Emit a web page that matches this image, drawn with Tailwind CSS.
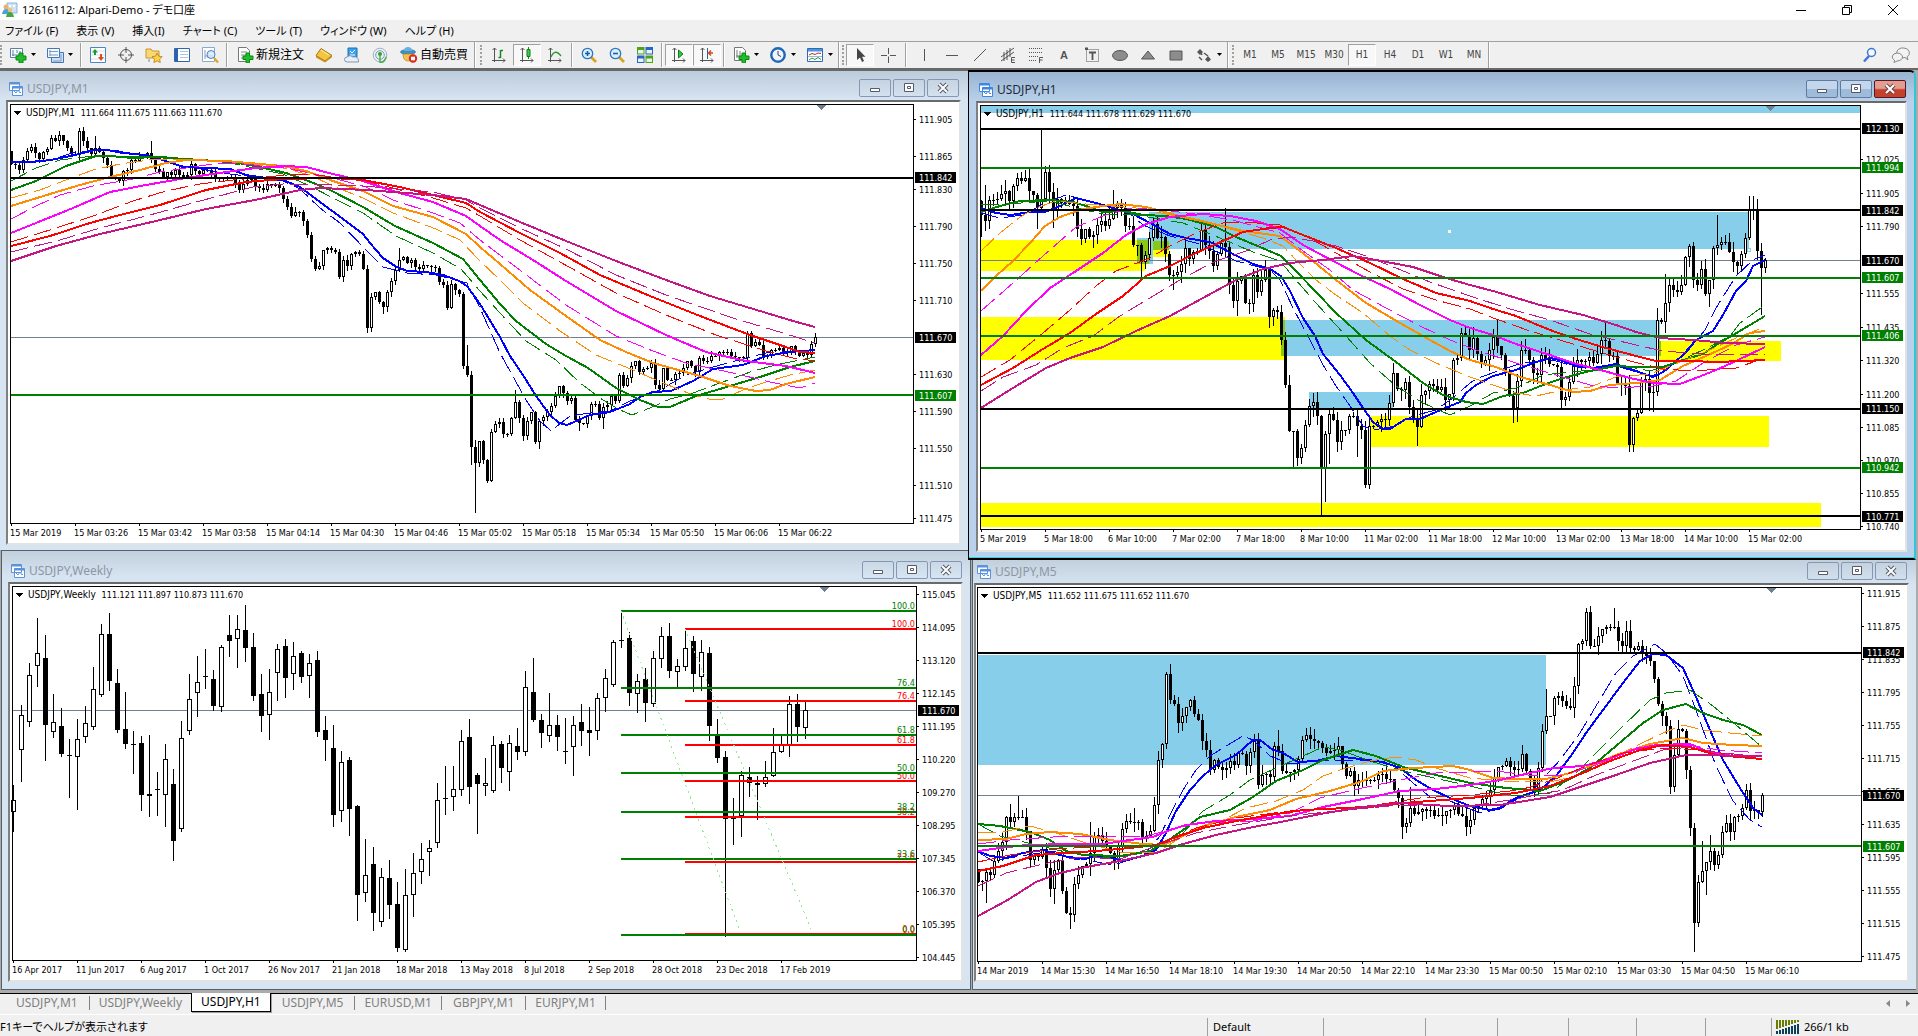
<!DOCTYPE html>
<html lang="ja">
<head>
    <meta charset="UTF-8">
    <meta name="viewport" content="width=device-width, initial-scale=1.0">
    <title>12616112: Alpari-Demo - デモ口座</title>
    <script src="https://cdn.jsdelivr.net/npm/@tailwindcss/browser@4"></script>
</head>
<body class="h-screen flex flex-col overflow-hidden bg-[#f0f0f0] text-black text-[12px] leading-4 font-['Noto_Sans','Noto_Sans_CJK_JP',sans-serif] [font-feature-settings:'palt']">

    <!-- Title bar -->
    <header class="h-5 shrink-0 bg-white flex items-center pl-0.5">
        <svg class="w-4 h-4" viewBox="0 0 16 16"><path d="M5 1h10v10H5z" fill="#cfe3f7" stroke="#8db4dc"/><path d="M7 3h2v2H7zM11 3h2v2h-2z" fill="#fff"/><circle cx="4" cy="5" r="2.5" fill="#e9b36a"/><path d="M0 12q1-5 4-5t4 5z" fill="#4da3d9"/><circle cx="8" cy="8" r="2.2" fill="#f0bd7c"/><path d="M4 15q1-5 4-5t4 5z" fill="#46a546"/></svg>
        <h1 class="pl-1 text-[11px] whitespace-nowrap">12616112: Alpari-Demo - デモ口座</h1>
        <div class="ml-auto flex pr-0.5">
            <button class="w-[46px] flex justify-center" aria-label="最小化"><svg class="w-3 h-3" viewBox="0 0 12 12"><path d="M1 6.5h10" stroke="#000"/></svg></button>
            <button class="w-[46px] flex justify-center" aria-label="元に戻す"><svg class="w-3 h-3" viewBox="0 0 12 12" fill="none" stroke="#000"><path d="M1.5 3.5h7v7h-7zM3.5 3V1.5h7v7H9"/></svg></button>
            <button class="w-[46px] flex justify-center" aria-label="閉じる"><svg class="w-3 h-3" viewBox="0 0 12 12"><path d="M1 1l10 10M11 1L1 11" stroke="#000"/></svg></button>
        </div>
    </header>

    <!-- Menu -->
    <nav class="h-[21px] shrink-0 flex items-center gap-[18px] px-[5px] text-[11px] whitespace-nowrap">
        <button>ファイル (F)</button>
        <button>表示 (V)</button>
        <button>挿入(I)</button>
        <button>チャート (C)</button>
        <button>ツール (T)</button>
        <button>ウィンドウ (W)</button>
        <button>ヘルプ (H)</button>
    </nav>

    <!-- Toolbars -->
    <div class="h-[29px] shrink-0 flex items-center border-t border-[#a0a0a0] border-b-2 border-b-[#696969] pb-px whitespace-nowrap">
        <div class="w-[2px] h-5 border-l-2 border-dotted border-[#a0a0a0] mr-0.5"></div>
        <button class="w-[37px] flex items-center gap-1 pl-[5px]" aria-label="新規チャート">
            <svg class="w-[18px] h-4" viewBox="0 0 18 16"><path d="M1.500 1.500h12v9h-12z" fill="#fff" stroke="#5b7fa6"/><path d="M4 3v6M3 8h9M8 3v3M11 4v3" stroke="#5b7fa6"/><path d="M10 6h4v3h3v4h-3v3h-4v-3H7V9h3z" fill="#1fbf2a" stroke="#0b8714"/></svg>
            <svg class="w-[5px] h-[3px]" viewBox="0 0 5 3"><path d="M0 0h5L2.500 3z"/></svg>
        </button>
        <button class="w-[37px] flex items-center gap-1 pl-[5px]" aria-label="プロファイル">
            <svg class="w-[18px] h-4" viewBox="0 0 18 16"><path d="M5.500 5.500h12v10h-12z" fill="#cfe0f5" stroke="#4577b5"/><path d="M1.500 1.500h12v9h-12z" fill="#f4f9ff" stroke="#4577b5"/><path d="M4 3v6M3 4.500h9M3 8h9M15 7v7H7" stroke="#7a9cc8" fill="none"/></svg>
            <svg class="w-[5px] h-[3px]" viewBox="0 0 5 3"><path d="M0 0h5L2.500 3z"/></svg>
        </button>
        <div class="w-[2px] h-6 mx-0.5 border-l border-[#a0a0a0] bg-white"></div>
        <button class="w-7 flex justify-center" aria-label="気配値表示"><svg class="w-4 h-4" viewBox="0 0 16 16"><path d="M.5.5h15v15H.5z" fill="#fff" stroke="#4b86c4"/><path d="M1 4h14M1 8h14M1 12h14" stroke="#cfe0f2"/><path d="M5 2l3 3.500H6V8H4V5.500H2z" fill="#16a022"/><path d="M11 14l3-4h-2V7h-2v3H8z" fill="#e2491d"/></svg></button>
        <button class="w-7 flex justify-center" aria-label="データウィンドウ"><svg class="w-4 h-4" viewBox="0 0 16 16" fill="none" stroke="#555"><circle cx="8" cy="8" r="5.500"/><path d="M8 0v6M8 10v6M0 8h6M10 8h6"/></svg></button>
        <button class="w-7 flex justify-center" aria-label="ナビゲーター"><svg class="w-[18px] h-4" viewBox="0 0 18 16"><path d="M1 2h5l1.500 2H14v7H1z" fill="#f8d775" stroke="#c8962e"/><path d="M4 12v3" stroke="#6e8fb9"/><path d="M12 6l1.700 3.200 3.500.500-2.600 2.400.700 3.500-3.300-1.700-3.200 1.700.700-3.500L7 9.700l3.500-.500z" fill="#ffd24a" stroke="#b67d10" stroke-width=".8"/></svg></button>
        <button class="w-7 flex justify-center" aria-label="ターミナル"><svg class="w-4 h-4" viewBox="0 0 16 16"><path d="M.5 1.500h15v13H.5z" fill="#fff" stroke="#2e66ac"/><path d="M1 2h3v12H1z" fill="#2b63b4"/><path d="M6 4.500h8M6 7.500h8M6 10.500h8" stroke="#a9c4e8"/></svg></button>
        <button class="w-7 flex justify-center" aria-label="ストラテジーテスター"><svg class="w-[18px] h-4" viewBox="0 0 18 16"><path d="M1.500.5h12v14h-12z" fill="#fff" stroke="#8aa9cf"/><path d="M4 3v9M7 5v6M4 9h8" stroke="#7b9cc4"/><circle cx="10" cy="7.500" r="4" fill="#d3e8fb" fill-opacity=".8" stroke="#4a83c0"/><path d="M13 11l4 4.500" stroke="#e0a422" stroke-width="2.200"/></svg></button>
        <div class="w-[2px] h-6 mx-0.5 border-l border-[#a0a0a0] bg-white"></div>
        <button class="w-20 flex items-center justify-center gap-0.5">
            <svg class="w-[18px] h-4" viewBox="0 0 18 16"><path d="M2.500.5h8l3 3v11h-11z" fill="#fff" stroke="#777"/><path d="M5 5h6M5 8h5M5 11h3" stroke="#888"/><path d="M10 6h3.500v3h3.500v3.500h-3.500v3.300H10v-3.300H7V9h3z" fill="#1fbf2a" stroke="#0b8714"/></svg>
            <span>新規注文</span>
        </button>
        <button class="w-7 flex justify-center" aria-label="MetaEditor"><svg class="w-[18px] h-4" viewBox="0 0 18 16"><path d="M6 1.500l11 7-7 5.500L1 8.500z" fill="#f4c542" stroke="#a8740e"/><path d="M1 8.500l9 5.500 7-5.500v1.700L10 15.500 1 10.500z" fill="#c98f17"/><path d="M6 3l8 5" stroke="#fff0b0"/></svg></button>
        <button class="w-7 flex justify-center" aria-label="MQL5"><svg class="w-4 h-4" viewBox="0 0 16 16"><path d="M4 1h9v9H4z" fill="#3aa2ea" stroke="#1c6eb6"/><path d="M6 4l2 2 3-3M6 8h5" stroke="#fff" fill="none"/><path d="M3 15a2.500 2.500 0 010-5q3-3 6 0 6-1 5.500 5z" fill="#e9eff7" stroke="#8295b3"/></svg></button>
        <button class="w-7 flex justify-center" aria-label="シグナル"><svg class="w-4 h-4" viewBox="0 0 16 16" fill="none"><circle cx="8" cy="8" r="6.800" stroke="#9bb0c4"/><circle cx="8" cy="8" r="4.300" stroke="#6f9bc4"/><circle cx="8" cy="7" r="2" fill="#2aa32f"/><path d="M8 8v8q5-1 6-6" stroke="#49b04c" stroke-width="1.500"/></svg></button>
        <button class="w-20 flex items-center justify-center gap-0.5">
            <svg class="w-[18px] h-4" viewBox="0 0 18 16"><ellipse cx="8" cy="5" rx="7.500" ry="2.500" fill="#3d90c9" stroke="#23628f" stroke-width=".6"/><path d="M4 4q0-4 4-4t4 4z" fill="#65b2e0"/><path d="M3 7h10q0 7-5 7T3 7z" fill="#f2c350" stroke="#b98319" stroke-width=".7"/><circle cx="13" cy="11.500" r="4.200" fill="#dd2a1b"/><path d="M11 9.700h4v3.600h-4z" fill="#fff"/></svg>
            <span>自動売買</span>
        </button>
        <div class="w-[2px] h-[26px] border-l border-[#a0a0a0] bg-white mr-1"></div>
        <div class="w-[2px] h-5 border-l-2 border-dotted border-[#a0a0a0] mr-[3px]"></div>
        <button class="w-7 flex justify-center" aria-label="バーチャート"><svg class="w-4 h-4" viewBox="0 0 16 16" fill="none" stroke="#555"><path d="M3.500 1v14M1 13.500h13M1.500 3l2-2 2 2M12 11.500l2 2-2 2"/><path d="M9.500 3v8M9.500 3.500h2.500M7.500 10.500h2" stroke="#158a20" stroke-width="1.500"/></svg></button>
        <button class="w-7 h-[22px] flex items-center justify-center bg-[#f8f8f8] border border-[#a0a0a0] border-r-white border-b-white" aria-label="ローソク足"><svg class="w-4 h-4" viewBox="0 0 16 16" fill="none" stroke="#555"><path d="M3.500 1v14M1 13.500h13M1.500 3l2-2 2 2M12 11.500l2 2-2 2"/><path d="M9.500 0v12" stroke="#158a20"/><path d="M8 2.500h3v7H8z" fill="#3ccc48" stroke="#0c7c18"/></svg></button>
        <button class="w-7 flex justify-center" aria-label="ラインチャート"><svg class="w-4 h-4" viewBox="0 0 16 16" fill="none" stroke="#555"><path d="M3.500 1v14M1 13.500h13M1.500 3l2-2 2 2M12 11.500l2 2-2 2"/><path d="M4 10q4-9 10-1" stroke="#2a9a34" stroke-width="1.300"/></svg></button>
        <div class="w-[2px] h-6 mx-0.5 border-l border-[#a0a0a0] bg-white"></div>
        <button class="w-7 flex justify-center" aria-label="拡大"><svg class="w-4 h-4" viewBox="0 0 16 16"><path d="M10 10l5 5" stroke="#d9a520" stroke-width="2.800"/><circle cx="6.500" cy="6.500" r="5.200" fill="#d9efff" stroke="#2f77bd" stroke-width="1.300"/><path d="M4 6.500h5M6.500 4v5" stroke="#1c5ea8" stroke-width="1.600"/></svg></button>
        <button class="w-7 flex justify-center" aria-label="縮小"><svg class="w-4 h-4" viewBox="0 0 16 16"><path d="M10 10l5 5" stroke="#d9a520" stroke-width="2.800"/><circle cx="6.500" cy="6.500" r="5.200" fill="#d9efff" stroke="#2f77bd" stroke-width="1.300"/><path d="M4 6.500h5" stroke="#1c5ea8" stroke-width="1.600"/></svg></button>
        <button class="w-7 flex justify-center" aria-label="整列"><svg class="w-4 h-4" viewBox="0 0 16 16"><path d="M0 0h7.500v7.500H0zM8.500 8.500H16V16H8.500z" fill="#4ba31a"/><path d="M8.500 0H16v7.500H8.500zM0 8.500h7.500V16H0z" fill="#2563cf"/><path d="M1 3h5.500v3.500H1zM9.500 3H15v3.500H9.500zM1 11.500h5.500V15H1zM9.500 11.500H15V15H9.500z" fill="#eaf3e4"/></svg></button>
        <div class="w-[2px] h-6 mx-0.5 border-l border-[#a0a0a0] bg-white"></div>
        <button class="w-7 h-[22px] flex items-center justify-center bg-[#f8f8f8] border border-[#a0a0a0] border-r-white border-b-white" aria-label="自動スクロール"><svg class="w-4 h-4" viewBox="0 0 16 16" fill="none" stroke="#555"><path d="M3.500 1v14M1 13.500h13M1.500 3l2-2 2 2M12 11.500l2 2-2 2"/><path d="M7.500 3l4.500 4-4.500 4z" fill="#3cc148" stroke="#128020"/></svg></button>
        <button class="w-7 h-[22px] flex items-center justify-center bg-[#f8f8f8] border border-[#a0a0a0] border-r-white border-b-white" aria-label="チャートシフト"><svg class="w-4 h-4" viewBox="0 0 16 16" fill="none" stroke="#555"><path d="M3.500 1v14M1 13.500h13M1.500 3l2-2 2 2M12 11.500l2 2-2 2"/><path d="M8.500 1v11" stroke="#2a62a8"/><path d="M14 6h-4m2-2.500L9.500 6 12 8.500" stroke="#d2451a" stroke-width="1.400"/></svg></button>
        <div class="w-[2px] h-6 mx-0.5 border-l border-[#a0a0a0] bg-white"></div>
        <button class="w-[37px] flex items-center gap-1 pl-[5px]" aria-label="インディケータ">
            <svg class="w-[18px] h-4" viewBox="0 0 18 16"><path d="M2.500.5h8l3 3v10h-11z" fill="#fff" stroke="#777"/><path d="M5 3v8M4 9h6M8 4v4" stroke="#777"/><path d="M10 6h3.500v3h3.500v3.500h-3.500v3.300H10v-3.300H7V9h3z" fill="#1fbf2a" stroke="#0b8714"/></svg>
            <svg class="w-[5px] h-[3px]" viewBox="0 0 5 3"><path d="M0 0h5L2.500 3z"/></svg>
        </button>
        <button class="w-[37px] flex items-center gap-1 pl-[5px]" aria-label="時間足設定">
            <svg class="w-[18px] h-4" viewBox="0 0 18 16"><circle cx="9" cy="8" r="6.700" fill="#eef6ff" stroke="#1d66b8" stroke-width="2.400"/><path d="M9 4v4l3 1.500" fill="none" stroke="#444"/></svg>
            <svg class="w-[5px] h-[3px]" viewBox="0 0 5 3"><path d="M0 0h5L2.500 3z"/></svg>
        </button>
        <button class="w-[37px] flex items-center gap-1 pl-[5px]" aria-label="定型チャート">
            <svg class="w-[18px] h-4" viewBox="0 0 18 16"><path d="M1.500 1.500h15v13h-15z" fill="#fff" stroke="#2d6ab5"/><path d="M2 2h14v2.500H2z" fill="#4f93dd"/><path d="M3 8l3-1.500 3 1 3-1.500 3 .5" fill="none" stroke="#a33"/><path d="M2 9.500h14" stroke="#9bbce2"/><path d="M3 13l3-2 3 1.500 3-2 3 2" fill="none" stroke="#2a9a34"/></svg>
            <svg class="w-[5px] h-[3px]" viewBox="0 0 5 3"><path d="M0 0h5L2.500 3z"/></svg>
        </button>
        <div class="w-[2px] h-[26px] border-l border-[#a0a0a0] bg-white mr-0.5"></div>
        <div class="w-[2px] h-5 border-l-2 border-dotted border-[#a0a0a0] mr-0.5"></div>
        <button class="w-7 h-[22px] flex items-center justify-center bg-[#f8f8f8] border border-[#a0a0a0] border-r-white border-b-white" aria-label="カーソル"><svg class="w-4 h-4" viewBox="0 0 16 16"><path d="M5 1v12l3-2.600 2 4.600 2-1-2-4.300h3.500z" fill="#444"/></svg></button>
        <button class="w-7 flex justify-center" aria-label="クロスヘア"><svg class="w-4 h-4" viewBox="0 0 16 16"><path d="M8.500 1v6M8.500 9.500V16M1 8.500h6M10 8.500h6" stroke="#555"/></svg></button>
        <div class="w-[2px] h-6 mx-[3px] border-l border-[#a0a0a0] bg-white"></div>
        <button class="w-7 flex justify-center" aria-label="垂直線"><svg class="w-4 h-4" viewBox="0 0 16 16"><path d="M8.500 2v12" stroke="#555"/></svg></button>
        <button class="w-7 flex justify-center" aria-label="水平線"><svg class="w-4 h-4" viewBox="0 0 16 16"><path d="M2 8.500h12" stroke="#555"/></svg></button>
        <button class="w-7 flex justify-center" aria-label="トレンドライン"><svg class="w-4 h-4" viewBox="0 0 16 16"><path d="M2 14L14 2" stroke="#555"/></svg></button>
        <button class="w-7 flex justify-center" aria-label="等距離チャネル"><svg class="w-4 h-4" viewBox="0 0 16 16" fill="none" stroke="#555"><path d="M1 10L14 1M1 14L14 5M4 5v9M7 3v10M10 1v9"/><path d="M15 10.500h-3.500v5H15M11.500 13h3"/></svg></button>
        <button class="w-7 flex justify-center" aria-label="フィボナッチ"><svg class="w-4 h-4" viewBox="0 0 16 16" fill="none" stroke="#555"><path d="M1 1.500h14M1 5.500h14M1 9.500h9M1 13.500h8" stroke-dasharray="1 1"/><path d="M15 10.500h-3.500V16M11.500 13h3"/></svg></button>
        <button class="w-7 font-bold text-[#555] text-[11px] font-['Liberation_Sans',sans-serif]" aria-label="テキスト">A</button>
        <button class="w-7 flex justify-center" aria-label="テキストラベル"><svg class="w-4 h-4" viewBox="0 0 16 16" fill="none" stroke="#555"><path d="M2.500 2.500h12v12h-12z" stroke-dasharray="1 1"/><path d="M1 .5h3v2.500H1z" fill="#555" stroke="none"/><path d="M5 5.500h7M8.500 5v8" stroke-width="1.800"/></svg></button>
        <button class="w-7 flex justify-center" aria-label="楕円"><svg class="w-4 h-4" viewBox="0 0 16 16"><ellipse cx="8" cy="8.500" rx="7.500" ry="5" fill="#8c8c8c" stroke="#555"/></svg></button>
        <button class="w-7 flex justify-center" aria-label="三角形"><svg class="w-4 h-4" viewBox="0 0 16 16"><path d="M8 4l6.500 8h-13z" fill="#8c8c8c" stroke="#555"/></svg></button>
        <button class="w-7 flex justify-center" aria-label="長方形"><svg class="w-4 h-4" viewBox="0 0 16 16"><path d="M2 4h12v9H2z" fill="#8c8c8c" stroke="#555"/></svg></button>
        <button class="w-[37px] flex items-center gap-1 pl-[5px]" aria-label="矢印">
            <svg class="w-[18px] h-4" viewBox="0 0 18 16"><path d="M5 2l3 3-3 3-3-3zM13 9l3 3.500-3 2.500-3-2.500z" fill="#555"/><path d="M4 10l3 3M9 6l4 3M6 6l1 2" stroke="#555" stroke-width="1.500"/></svg>
            <svg class="w-[5px] h-[3px]" viewBox="0 0 5 3"><path d="M0 0h5L2.500 3z"/></svg>
        </button>
        <div class="w-[2px] h-[26px] border-l border-[#a0a0a0] bg-white mr-[3px]"></div>
        <div class="w-[2px] h-5 border-l-2 border-dotted border-[#a0a0a0] mr-0.5"></div>
        <div class="flex items-center text-[10px] text-[#444] font-['DejaVu_Sans_Condensed','DejaVu_Sans',sans-serif]">
            <button class="w-7">M1</button>
            <button class="w-7">M5</button>
            <button class="w-7">M15</button>
            <button class="w-7">M30</button>
            <button class="w-7 h-[22px] bg-[#f8f8f8] border border-[#a0a0a0] border-r-white border-b-white">H1</button>
            <button class="w-7">H4</button>
            <button class="w-7">D1</button>
            <button class="w-7">W1</button>
            <button class="w-7">MN</button>
        </div>
        <div class="w-[2px] h-[26px] border-l border-[#a0a0a0] bg-white"></div>
        <div class="ml-auto flex items-center gap-3 pr-1.5">
            <button aria-label="検索"><svg class="w-4 h-4" viewBox="0 0 16 16" fill="none"><path d="M7 9l-5 5.500" stroke="#3d78d8" stroke-width="2.500"/><circle cx="9.500" cy="5.500" r="4" fill="#f4f9ff" stroke="#3d78d8" stroke-width="1.500"/></svg></button>
            <button aria-label="チャット"><svg class="w-[22px] h-4" viewBox="0 0 22 16" fill="#f3f3f3" stroke="#888"><path d="M14 1a6 5 0 013 9l1 3-3-2.500A6 5 0 1114 1z"/><path d="M7 6a5.500 4 0 110 8l-3 1.500.5-2.300A5.500 4 0 017 6z"/></svg></button>
        </div>
    </div>

    <!-- Chart windows -->
    <main class="flex-1 min-h-0 grid grid-cols-[971fr_947fr] bg-[#ababab]">
        <div class="flex flex-col min-h-0 min-w-0 pb-[3px]">
            <section class="flex-[482] min-h-0 mr-[3px] flex flex-col bg-[#d7e4f2] border-t border-[#696969] pl-1.5 pr-[7px] pb-[5px] bg-linear-to-b from-[#bdccdb] via-[#d7e4f2] via-6% to-[#d7e4f2]">
                <div class="h-[29px] shrink-0 flex items-end gap-[2px] pb-[3px] pl-[3px]">
                    <svg class="w-3.5 h-3.5 self-end mb-px" viewBox="0 0 14 14" fill="#fff" stroke="#5a93dc"><path d="M.5.5h10v8H.5zM3.500 4.500h10v9h-10z"/><path d="M.5 1.500h10M3.500 5.500h10" stroke-width="2"/><path d="M5 9l2 2 2-3 2 3 1-1" fill="none"/></svg>
                    <h2 class="flex-1 pl-0.5 text-[#8c97a3]">USDJPY,M1</h2>
                    <button class="w-8 h-[18px] rounded-xs border border-[#8797b3] flex items-center justify-center" aria-label="最小化"><svg class="w-3 h-3" viewBox="0 0 12 12"><path d="M1.500 6.500h9v3h-9z" fill="#fff" stroke="#555b6b"/></svg></button>
                    <button class="w-8 h-[18px] rounded-xs border border-[#8797b3] flex items-center justify-center" aria-label="最大化"><svg class="w-3 h-3" viewBox="0 0 12 12" fill="#fff" stroke="#555b6b"><path d="M1.500 1.500h9v8h-9z"/><path d="M4.500 4.500h3v2h-3z"/></svg></button>
                    <button class="w-8 h-[18px] rounded-xs border border-[#8797b3] flex items-center justify-center mr-0.5" aria-label="閉じる"><svg class="w-3 h-3" viewBox="0 0 12 12"><path d="M2 2l8 8M10 2l-8 8" stroke="#555b6b" stroke-width="4"/><path d="M2 2l8 8M10 2l-8 8" stroke="#fff" stroke-width="2"/></svg></button>
                </div>
                <div class="flex-1 min-h-0 bg-white border-2 border-[#e3e3e3] border-t-[#696969] border-l-[#808080]"><svg id="chart-m1" class="block w-full h-full" role="img" aria-label="USDJPY M1"></svg></div>
            </section>
            <section class="flex-[439] min-h-0 ml-px flex flex-col border border-[#55606c] pl-1.5 pr-[7px] pb-[7px] bg-linear-to-b from-[#c2d0de] via-[#d7e4f2] via-6% to-[#d7e4f2]">
                <div class="h-[31px] shrink-0 flex items-end gap-[2px] pb-[3px] pl-[3px]">
                    <svg class="w-3.5 h-3.5 self-end mb-px" viewBox="0 0 14 14" fill="#fff" stroke="#5a93dc"><path d="M.5.5h10v8H.5zM3.500 4.500h10v9h-10z"/><path d="M.5 1.500h10M3.500 5.500h10" stroke-width="2"/><path d="M5 9l2 2 2-3 2 3 1-1" fill="none"/></svg>
                    <h2 class="flex-1 pl-0.5 text-[#8c97a3]">USDJPY,Weekly</h2>
                    <button class="w-8 h-[18px] rounded-xs border border-[#8797b3] flex items-center justify-center" aria-label="最小化"><svg class="w-3 h-3" viewBox="0 0 12 12"><path d="M1.500 6.500h9v3h-9z" fill="#fff" stroke="#555b6b"/></svg></button>
                    <button class="w-8 h-[18px] rounded-xs border border-[#8797b3] flex items-center justify-center" aria-label="最大化"><svg class="w-3 h-3" viewBox="0 0 12 12" fill="#fff" stroke="#555b6b"><path d="M1.500 1.500h9v8h-9z"/><path d="M4.500 4.500h3v2h-3z"/></svg></button>
                    <button class="w-8 h-[18px] rounded-xs border border-[#8797b3] flex items-center justify-center mr-px" aria-label="閉じる"><svg class="w-3 h-3" viewBox="0 0 12 12"><path d="M2 2l8 8M10 2l-8 8" stroke="#555b6b" stroke-width="4"/><path d="M2 2l8 8M10 2l-8 8" stroke="#fff" stroke-width="2"/></svg></button>
                </div>
                <div class="flex-1 min-h-0 bg-white border-2 border-[#e3e3e3] border-t-[#696969] border-l-[#808080]"><svg id="chart-weekly" class="block w-full h-full" role="img" aria-label="USDJPY Weekly"></svg></div>
            </section>
        </div>
        <div class="flex flex-col min-h-0 min-w-0 pb-[3px] pr-[2px]">
            <section class="flex-[490] min-h-0 -ml-[3px] flex flex-col border border-black border-b-2 border-r-2 border-r-[#2fc6d8] border-t-2 rounded-tr-md pl-[7px] pr-[7px] pb-1.5 bg-linear-to-b from-[#99b4d1] via-[#b9d1ea] via-6% to-[#b9d1ea] shadow-[inset_0_-1px_0_#2fd6e8]">
                <div class="h-[29px] shrink-0 flex items-end gap-[2px] pb-[3px] pl-[3px]">
                    <svg class="w-3.5 h-3.5 self-end mb-px" viewBox="0 0 14 14" fill="#fff" stroke="#3f86e0"><path d="M.5.5h10v8H.5zM3.500 4.500h10v9h-10z"/><path d="M.5 1.500h10M3.500 5.500h10" stroke-width="2"/><path d="M5 9l2 2 2-3 2 3 1-1" fill="none"/></svg>
                    <h2 class="flex-1 pl-0.5 text-[#1e2b3a]">USDJPY,H1</h2>
                    <button class="w-8 h-[18px] rounded-xs border border-[#5f7ba0] bg-linear-to-b from-[#c3d6eb] from-50% to-[#9ebbda] to-50% flex items-center justify-center" aria-label="最小化"><svg class="w-3 h-3" viewBox="0 0 12 12"><path d="M1.500 6.500h9v3h-9z" fill="#fff" stroke="#555b6b"/></svg></button>
                    <button class="w-8 h-[18px] rounded-xs border border-[#5f7ba0] bg-linear-to-b from-[#c3d6eb] from-50% to-[#9ebbda] to-50% flex items-center justify-center" aria-label="最大化"><svg class="w-3 h-3" viewBox="0 0 12 12" fill="#fff" stroke="#555b6b"><path d="M1.500 1.500h9v8h-9z"/><path d="M4.500 4.500h3v2h-3z"/></svg></button>
                    <button class="w-8 h-[18px] rounded-xs border border-[#5b1620] bg-linear-to-b from-[#e39c90] from-45% to-[#c4412c] to-55% flex items-center justify-center mr-px" aria-label="閉じる"><svg class="w-3 h-3" viewBox="0 0 12 12"><path d="M2 2l8 8M10 2l-8 8" stroke="#6a4450" stroke-width="4"/><path d="M2 2l8 8M10 2l-8 8" stroke="#fff" stroke-width="2"/></svg></button>
                </div>
                <div class="flex-1 min-h-0 bg-white border-2 border-[#e3e3e3] border-t-[#696969] border-l-[#808080]"><svg id="chart-h1" class="block w-full h-full" role="img" aria-label="USDJPY H1"></svg></div>
            </section>
            <section class="flex-[431] min-h-0 ml-px flex flex-col border-l border-b border-[#55606c] pl-px pr-[7px] pb-[7px] bg-linear-to-b from-[#c2d0de] via-[#d7e4f2] via-6% to-[#d7e4f2]">
                <div class="h-[23px] shrink-0 flex items-end gap-[2px] pb-[3px] pl-[3px]">
                    <svg class="w-3.5 h-3.5 self-end mb-px" viewBox="0 0 14 14" fill="#fff" stroke="#5a93dc"><path d="M.5.5h10v8H.5zM3.500 4.500h10v9h-10z"/><path d="M.5 1.500h10M3.500 5.500h10" stroke-width="2"/><path d="M5 9l2 2 2-3 2 3 1-1" fill="none"/></svg>
                    <h2 class="flex-1 pl-0.5 text-[#8c97a3]">USDJPY,M5</h2>
                    <button class="w-8 h-[18px] rounded-xs border border-[#8797b3] flex items-center justify-center" aria-label="最小化"><svg class="w-3 h-3" viewBox="0 0 12 12"><path d="M1.500 6.500h9v3h-9z" fill="#fff" stroke="#555b6b"/></svg></button>
                    <button class="w-8 h-[18px] rounded-xs border border-[#8797b3] flex items-center justify-center" aria-label="最大化"><svg class="w-3 h-3" viewBox="0 0 12 12" fill="#fff" stroke="#555b6b"><path d="M1.500 1.500h9v8h-9z"/><path d="M4.500 4.500h3v2h-3z"/></svg></button>
                    <button class="w-8 h-[18px] rounded-xs border border-[#8797b3] flex items-center justify-center mr-0.5" aria-label="閉じる"><svg class="w-3 h-3" viewBox="0 0 12 12"><path d="M2 2l8 8M10 2l-8 8" stroke="#555b6b" stroke-width="4"/><path d="M2 2l8 8M10 2l-8 8" stroke="#fff" stroke-width="2"/></svg></button>
                </div>
                <div class="flex-1 min-h-0 bg-white border-2 border-[#e3e3e3] border-t-[#696969] border-l-[#808080]"><svg id="chart-m5" class="block w-full h-full" role="img" aria-label="USDJPY M5"></svg></div>
            </section>
        </div>
    </main>

    <!-- Chart tabs -->
    <nav class="h-[21px] shrink-0 flex items-start border-t border-black text-[#808080] whitespace-nowrap">
        <button class="h-[18px] flex items-center pl-4 pr-[11px]">USDJPY,M1</button>
        <span class="w-px h-3.5 mt-0.5 bg-[#808080]"></span>
        <button class="h-[18px] flex items-center px-[9px]">USDJPY,Weekly</button>
        <button class="h-[19px] -mt-px flex items-center px-[9px] bg-white text-black border border-t-0 border-black shadow-[1px_1px_0_#a0a0a0]">USDJPY,H1</button>
        <button class="h-[18px] flex items-center px-[11px]">USDJPY,M5</button>
        <span class="w-px h-3.5 mt-0.5 bg-[#808080]"></span>
        <button class="h-[18px] flex items-center px-[9px]">EURUSD,M1</button>
        <span class="w-px h-3.5 mt-0.5 bg-[#808080]"></span>
        <button class="h-[18px] flex items-center px-[11px]">GBPJPY,M1</button>
        <span class="w-px h-3.5 mt-0.5 bg-[#808080]"></span>
        <button class="h-[18px] flex items-center px-[9px]">EURJPY,M1</button>
        <span class="w-px h-3.5 mt-0.5 bg-[#808080]"></span>
        <div class="ml-auto flex items-center gap-4 pr-2 pt-1.5">
            <button aria-label="前へ"><svg class="w-1 h-[7px]" viewBox="0 0 4 7"><path d="M4 0v7L0 3.500z" fill="#888"/></svg></button>
            <button aria-label="次へ"><svg class="w-1 h-[7px]" viewBox="0 0 4 7"><path d="M0 0v7l4-3.500z" fill="#888"/></svg></button>
        </div>
    </nav>

    <!-- Status bar -->
    <footer class="h-[22px] shrink-0 flex items-stretch border-t border-white pt-[3px] whitespace-nowrap">
        <div class="flex-1 text-[11px] leading-[18px]">F1キーでヘルプが表示されます</div>
        <div class="w-[116px] pl-[5px] border-l border-[#a0a0a0] text-[11px] leading-[18px]">Default</div>
        <div class="w-[102px] border-l border-[#a0a0a0]"></div>
        <div class="w-[72px] border-l border-[#a0a0a0]"></div>
        <div class="w-[71px] border-l border-[#a0a0a0]"></div>
        <div class="w-[68px] border-l border-[#a0a0a0]"></div>
        <div class="w-[69px] border-l border-[#a0a0a0]"></div>
        <div class="w-[66px] border-l border-[#a0a0a0]"></div>
        <div class="w-[147px] pl-1 border-l border-[#a0a0a0] flex items-center gap-1 text-[11px] leading-[18px]">
            <svg class="w-6 h-3.5" viewBox="0 0 24 14"><path d="M0 0h2v9H0zM3 0h2v8H3zM6 0h2v7H6zM9 0h2v6H9zM12 0h2v5h-2zM15 0h2v4h-2zM18 0h2v3h-2zM21 0h2v2h-2z" fill="#6b7d00"/><path d="M0 11h2v3H0zM3 10h2v4H3zM6 9h2v5H6zM9 8h2v6H9zM12 7h2v7h-2zM15 6h2v8h-2zM18 5h2v9h-2zM21 4h2v10h-2z" fill="#0b3f5c"/></svg>
            <span>266/1 kb</span>
        </div>
    </footer>

    <script>
        // All chart data is in thirds of a pixel
        const COLORS = ["#0000ff", "#008000", "#ff8c00", "#ff00ff", "#ff0000", "#c71585"];

        const charts = {
            "chart-m1": {
                ox: 8, oy: 2, x0: 34, step: 12, half: 1, wick: 14,
                frame: [31, 13, 2741, 1270],
                title: ["USDJPY,M1", "111.664 111.675 111.663 111.670"], shift: 2464,
                rects: [],
                lines: [[234, "#000"], [887, "#008000"]], bid: 712,
                closes: [193,195,212,180,155,143,160,178,158,147,115,125,107,125,145,162,165,94,125,146,163,145,157,175,195,228,235,245,215,212,180,183,170,165,160,180,208,218,232,218,226,210,226,232,227,193,215,222,210,212,220,233,234,235,236,232,252,270,252,240,235,260,264,270,253,260,252,265,298,322,348,336,336,365,405,478,508,498,452,445,452,458,533,480,500,463,457,463,507,686,592,577,608,622,578,545,510,480,472,490,482,503,507,495,500,502,505,547,556,626,553,572,582,798,825,1042,1090,1024,1082,1143,996,972,967,1003,1003,955,908,955,1010,965,937,1027,965,952,937,920,890,860,880,903,895,960,970,972,950,912,913,955,922,917,890,903,826,860,835,798,783,818,808,806,790,855,868,806,840,842,824,820,805,785,800,818,775,784,785,768,770,757,756,757,770,772,773,775,700,738,728,735,768,765,752,750,745,755,757,740,757,768,760,765,734,712],
                spikes: {21:[108],35:[124],93:[0,640],97:[445],114:[735],115:[0,1093],116:[1020,1238],126:[870],132:[0,1046],142:[0,992],148:[0,986]},
                ma: [
                    ["34,186 94,186 154,180 226,165 286,152 322,150 370,160 440,166 490,182 550,203 620,206 690,208 740,226 800,234 850,240 900,262 960,308 1030,358 1090,402 1110,430 1150,475 1186,500 1222,513 1280,516 1330,525 1378,545 1402,558 1440,612 1500,712 1530,770 1570,825 1610,890 1650,945 1678,970 1702,975 1770,945 1830,937 1890,913 1920,893 1960,878 2015,873 2080,843 2140,808 2230,795 2300,768 2370,756 2446,750",
                     "34,186 154,182 226,158 300,150 340,150 440,168 550,198 690,222 850,245 900,268 960,325 1020,370 1100,450 1150,503 1222,520 1310,525 1402,550 1440,625 1500,760 1580,900 1620,965 1654,993 1710,948 1770,940 1830,935 1890,905 1980,870 2060,825 2160,795 2300,760 2446,752"],
                    ["34,270 110,245 200,200 290,170 330,168 400,174 470,172 600,180 700,186 780,202 860,220 920,240 990,270 1090,322 1186,380 1300,430 1390,478 1440,540 1500,612 1550,665 1640,732 1700,770 1765,805 1850,865 1920,900 1975,922 2010,922 2090,890 2190,860 2280,832 2370,803 2446,783",
                     "34,243 110,205 180,180 280,168 470,170 690,190 850,222 930,258 1000,295 1090,340 1190,408 1300,460 1385,508 1440,575 1500,640 1580,725 1670,780 1740,850 1810,900 1860,932 1896,946 1950,924 2010,898 2080,880 2160,850 2260,815 2340,792 2446,772"],
                    ["34,320 150,284 240,255 330,233 420,212 500,190 560,182 680,185 850,198 920,215 1000,245 1090,275 1180,320 1300,352 1400,402 1440,442 1500,494 1590,570 1700,650 1800,720 1880,758 1960,790 2100,828 2190,858 2270,873 2310,872 2360,853 2446,833",
                     "34,295 120,270 200,240 280,212 360,192 470,178 560,180 700,187 850,206 930,226 1000,260 1090,295 1180,340 1310,388 1380,422 1440,485 1500,540 1570,610 1680,695 1790,765 1900,810 1990,850 2080,885 2140,900 2170,898 2230,870 2290,850 2370,825 2446,810"],
                    ["34,400 110,370 220,325 330,278 440,255 560,235 680,218 770,206 850,200 920,203 1000,222 1090,245 1190,278 1300,308 1400,350 1440,380 1500,420 1600,480 1700,545 1850,635 2000,705 2120,758 2240,785 2360,800 2446,820",
                     "34,357 110,320 180,285 280,260 400,238 480,218 560,205 640,192 700,190 860,204 1000,235 1100,262 1180,300 1300,340 1380,370 1440,420 1500,465 1600,540 1700,615 1850,708 1960,755 2060,790 2200,820 2310,848 2400,865 2446,850"],
                    ["34,440 150,410 270,370 360,345 480,315 620,272 740,248 850,238 1000,236 1090,242 1200,262 1300,285 1400,310 1440,336 1560,400 1680,460 1800,525 1950,590 2100,650 2250,705 2350,740 2400,757 2446,760",
                     "34,428 160,388 280,348 400,305 500,275 600,252 700,240 830,228 920,222 1090,240 1200,270 1300,295 1400,325 1440,350 1560,420 1680,487 1850,580 2000,645 2150,705 2300,755 2380,775 2446,785"],
                    ["34,484 170,440 300,402 470,365 620,328 780,298 900,270 960,266 1100,272 1300,285 1400,297 1440,316 1560,368 1700,425 1850,485 2000,540 2130,590 2280,635 2380,663 2446,682",
                     "34,458 180,420 300,385 450,345 600,305 760,262 850,253 1000,256 1090,258 1300,276 1400,300 1440,325 1560,385 1700,447 1850,525 2000,585 2200,655 2350,700 2446,730"]
                ],
                prices: [["111.905",58],["111.865",169],["111.830",268],["111.790",380],["111.750",491],["111.710",602],["111.630",824],["111.590",935],["111.550",1046],["111.510",1157],["111.475",1255]],
                badges: [["111.842",233,"#000"],["111.670",713,"#000"],["111.607",887,"#008000"]],
                times: ["15 Mar 2019","15 Mar 03:26","15 Mar 03:42","15 Mar 03:58","15 Mar 04:14","15 Mar 04:30","15 Mar 04:46","15 Mar 05:02","15 Mar 05:18","15 Mar 05:34","15 Mar 05:50","15 Mar 06:06","15 Mar 06:22"]
            },
            "chart-h1": {
                ox: 8, oy: 3, x0: 34, step: 12, half: 1, wick: 34,
                frame: [31, 16, 2671, 1288],
                title: ["USDJPY,H1", "111.644 111.678 111.629 111.670"], shift: 2401,
                rects: [[34,18,2671,39,"#87ceeb"],[34,420,525,513,"#ff0"],[34,652,945,782,"#ff0"],[537,336,2337,449,"#87ceeb"],[502,414,549,494,"#87ceeb"],[502,420,537,494,"#86c815"],[549,423,597,450,"#86c815"],[549,450,597,471,"#ff0"],[933,660,2070,770,"#87ceeb"],[933,660,945,770,"#86c815"],[1017,876,1270,927,"#87ceeb"],[1198,948,2397,1043,"#ff0"],[2068,723,2433,783,"#ff0"],[2067,723,2073,770,"#86c815"],[34,1210,2553,1283,"#ff0"],[1434,390,1443,399,"#fff"],[2331,444,2343,456,"#87ceeb"],[2334,447,2340,453,"#fff"]],
                lines: [[87,"#000"],[332,"#000"],[927,"#000"],[1250,"#000"],[204,"#008000"],[534,"#008000"],[708,"#008000"],[1104,"#008000"]], bid: 482,
                closes: [345,365,300,300,297,283,274,305,260,235,243,236,275,286,325,298,216,278,330,298,310,300,312,318,388,418,388,412,405,375,363,380,357,325,312,325,378,378,435,436,488,465,414,372,415,412,462,525,527,518,493,445,478,457,455,390,435,455,498,462,430,442,555,603,545,528,610,614,525,578,540,512,652,632,636,720,856,993,994,1075,1045,976,918,908,948,1105,1003,942,962,1027,992,992,950,948,980,990,1156,978,978,968,958,962,910,820,868,870,846,922,955,982,885,873,852,858,870,863,900,883,780,775,700,710,750,715,762,793,782,750,712,738,765,820,890,925,845,752,750,780,820,825,765,777,793,795,802,900,893,848,800,780,787,785,772,790,762,722,724,768,770,850,855,858,1035,955,940,845,838,880,878,662,668,610,555,572,577,557,472,440,540,555,508,583,542,446,436,428,426,458,486,500,463,414,328,328,455,505,482],
                spikes: {0:[300,410],1:[255],14:[0,385],15:[88],18:[0,382],33:[270],40:[0,530],48:[0,568],61:[324],64:[0,645],78:[0,1103],85:[0,1248],86:[0,1205],87:[0,1090],94:[0,1070],96:[0,1162],97:[0,1165],109:[0,1035],129:[660],133:[0,968],134:[0,965],156:[664],163:[0,1055],167:[0,932],168:[0,935],169:[625],171:[522],182:[0,620],184:[346],192:[290],193:[290],195:[430,643]},
                ma: [
                    ["34,325 80,340 125,346 180,338 226,338 270,318 320,294 380,310 440,328 490,342 540,370 600,402 650,416 720,428 790,462 850,492 900,508 935,528 960,575 1000,655 1035,708 1060,762 1110,825 1150,880 1180,925 1210,968 1240,987 1260,987 1310,957 1350,957 1400,938 1440,920 1470,908 1490,880 1520,855 1570,830 1640,810 1690,790 1740,775 1770,780 1820,798 1880,805 1940,792 2000,815 2050,833 2080,818 2140,765 2180,720 2230,695 2260,645 2300,575 2330,545 2350,500 2386,482",
                     "34,340 90,355 160,345 226,310 290,287 350,300 440,325 490,350 520,375 600,410 700,435 800,485 900,510 930,540 970,625 1020,720 1060,795 1100,860 1140,920 1180,980 1210,992 1260,982 1330,950 1400,930 1450,895 1500,850 1520,838 1600,808 1660,790 1750,780 1830,805 1930,795 2040,830 2080,820 2150,760 2205,690 2240,625 2300,530 2350,480 2386,466"],
                    ["34,338 90,320 150,305 240,300 310,306 350,320 400,336 460,335 520,347 590,348 650,358 740,382 800,412 870,443 935,468 980,515 1040,578 1100,640 1190,722 1280,788 1360,850 1420,885 1490,908 1540,912 1600,888 1660,880 1720,855 1780,835 1860,815 1940,800 2000,803 2080,803 2140,780 2200,762 2240,735 2290,705 2340,675 2386,648",
                     "34,313 110,313 240,303 320,325 400,342 500,345 640,370 750,415 850,458 930,485 980,540 1040,610 1130,708 1200,790 1280,860 1360,910 1440,947 1500,918 1570,880 1640,865 1720,825 1860,812 1950,795 2040,815 2100,795 2200,750 2280,710 2310,670 2386,616"],
                    ["34,575 80,530 130,485 180,430 226,380 270,353 340,328 400,318 450,313 530,322 620,345 720,370 820,393 930,410 980,445 1030,485 1100,540 1190,610 1290,670 1380,722 1440,755 1500,780 1580,803 1650,832 1740,855 1810,876 1860,875 1920,855 2000,850 2070,840 2140,800 2210,770 2280,735 2340,700 2386,695",
                     "34,455 90,400 150,352 200,325 260,305 350,312 500,325 620,350 740,375 880,415 940,440 980,480 1040,540 1100,585 1180,640 1260,710 1320,750 1400,790 1500,832 1570,855 1640,880 1700,890 1780,870 1860,862 1940,832 2040,822 2100,800 2200,760 2300,715 2386,682"],
                    ["34,765 100,710 170,635 240,565 320,515 400,460 470,405 530,372 600,353 700,343 780,348 860,365 930,388 1000,435 1090,485 1170,525 1260,568 1350,615 1440,660 1500,685 1570,705 1640,732 1740,765 1810,790 1890,810 1980,835 2050,850 2130,852 2180,835 2240,812 2300,785 2386,741",
                     "34,635 130,550 220,470 320,382 400,348 480,325 580,330 700,345 800,365 930,400 1000,455 1080,512 1150,570 1250,625 1350,680 1440,720 1520,750 1640,790 1760,825 1860,855 1940,865 2050,858 2120,845 2200,790 2300,735 2386,712"],
                    ["34,857 130,805 220,748 300,700 380,643 460,588 530,530 600,500 680,460 760,425 820,398 900,385 940,382 1000,405 1100,445 1200,490 1300,538 1400,580 1500,604 1570,628 1640,650 1740,690 1820,718 1910,745 2000,770 2060,783 2160,783 2240,788 2320,785 2386,780",
                     "34,832 120,780 220,700 300,630 380,560 440,515 540,475 600,440 680,400 760,370 830,367 930,375 1010,410 1100,460 1200,518 1300,568 1400,600 1500,628 1580,658 1680,695 1780,725 1880,755 1980,785 2080,808 2170,815 2300,805 2386,775"],
                    ["34,924 130,865 230,805 300,775 400,742 500,695 600,650 700,595 800,540 880,508 960,490 1060,480 1150,470 1220,480 1330,503 1430,535 1500,556 1570,575 1710,617 1840,645 1940,675 2000,698 2070,715 2170,722 2270,731 2386,732",
                     "34,875 100,832 200,795 280,745 370,708 450,650 540,595 640,535 740,485 830,455 900,420 960,412 1030,423 1100,440 1180,465 1280,505 1380,548 1500,590 1620,628 1740,660 1860,702 2000,735 2080,755 2200,763 2386,763"]
                ],
                prices: [["112.025",178],["111.905",281],["111.790",380],["111.555",580],["111.435",683],["111.320",782],["111.200",884],["111.085",983],["110.970",1081],["110.855",1181],["110.740",1280]],
                badges: [["112.130",86,"#000"],["111.994",203,"#008000"],["111.842",332,"#000"],["111.670",482,"#000"],["111.607",533,"#008000"],["111.406",707,"#008000"],["111.150",926,"#000"],["110.942",1103,"#008000"],["110.771",1250,"#000"]],
                times: ["5 Mar 2019","5 Mar 18:00","6 Mar 10:00","7 Mar 02:00","7 Mar 18:00","8 Mar 10:00","11 Mar 02:00","11 Mar 18:00","12 Mar 10:00","13 Mar 02:00","13 Mar 18:00","14 Mar 10:00","15 Mar 02:00"]
            },
            "chart-weekly": {
                ox: 10, oy: 24, x0: 40, step: 24, half: 2, wick: 0,
                frame: [37, 80, 2750, 1201],
                title: ["USDJPY,Weekly", "111.121 111.897 110.873 111.670"], shift: 2474,
                rects: [], lines: [], bid: 452, ma: [],
                // high, open, close, low
                ohlc: [[675,757,722,815],[437,572,466,665],[310,486,346,500],[174,320,280,378],[226,295,497,600],[402,517,487,533],[444,498,584,590],[537,586,590,713],[477,593,538,747],[438,533,490,548],[321,503,388,507],[192,407,223,410],[159,223,365,392],[327,370,510,518],[396,508,554,566],[513,552,556,641],[529,549,707,752],[525,710,702,768],[636,688,690,765],[552,707,598,800],[627,672,845,900],[484,808,535,815],[342,515,418,522],[289,401,367,470],[267,348,353,386],[331,358,440,450],[255,443,262,453],[165,226,245,290],[165,239,208,321],[135,211,266,305],[219,262,410,422],[342,403,470,513],[327,467,397,537],[252,341,268,420],[237,259,356,413],[246,344,289,387],[273,280,353,368],[282,350,310,413],[273,301,518,530],[469,511,540,602],[495,565,767,800],[573,755,606,785],[591,601,749,825],[735,739,1007,1080],[837,1000,946,1025],[862,913,1061,1112],[924,1088,952,1100],[901,955,1037,1076],[967,1033,1166,1175],[927,1172,1006,1175],[880,1007,940,1070],[850,938,898,971],[841,878,865,945],[670,851,721,863],[618,714,719,762],[618,713,688,752],[511,691,544,705],[478,532,683,731],[639,646,674,819],[594,680,670,705],[529,695,556,698],[543,553,626,668],[526,637,550,690],[504,559,578,597],[333,577,382,587],[295,397,480,483],[462,480,521,563],[399,529,496,545],[465,496,533,570],[474,574,578,611],[468,562,496,647],[433,487,515,555],[441,511,521,585],[400,515,415,537],[327,415,355,453],[240,376,247,378],[155,240,245,261],[217,235,401,435],[343,403,364,456],[324,358,431,483],[274,434,295,440],[201,299,229,321],[189,229,335,353],[297,337,319,381],[208,323,265,330],[229,244,344,395],[240,352,277,392],[262,280,500,540],[477,526,596,608],[573,592,779,1130],[714,773,779,852],[633,770,646,830],[621,652,671,710],[648,669,677,777],[603,674,652,680],[504,649,577,650],[525,577,555,578],[408,555,433,588],[402,433,503,543],[424,506,452,534]],
                fibs: [
                    { x: 2056, color: "#f00", ys: [207,423,555,663,771,906,1122], end: [2438,1115] },
                    { x: 1864, color: "#008000", ys: [153,384,525,639,756,897,1125], end: [2222,1115] }
                ],
                prices: [["115.045",104],["114.095",203],["113.120",302],["112.145",401],["111.195",500],["110.220",599],["109.270",698],["108.295",797],["107.345",895],["106.370",994],["105.395",1093],["104.445",1192]],
                badges: [["111.670",452,"#000"]],
                times: ["16 Apr 2017","11 Jun 2017","6 Aug 2017","1 Oct 2017","26 Nov 2017","21 Jan 2018","18 Mar 2018","13 May 2018","8 Jul 2018","2 Sep 2018","28 Oct 2018","23 Dec 2018","17 Feb 2019"]
            },
            "chart-m5": {
                ox: 6, oy: 25, x0: 25, step: 12, half: 1, wick: 30,
                frame: [22, 83, 2675, 1204],
                title: ["USDJPY,M5", "111.652 111.675 111.652 111.670"], shift: 2404,
                rects: [[24,285,1728,615,"#87ceeb"]],
                lines: [[279,"#000"],[860,"#008000"]], bid: 706,
                closes: [968,965,938,945,905,875,848,772,788,773,772,772,815,900,890,893,868,925,988,930,900,995,1060,1065,973,945,918,912,880,830,825,845,860,880,905,860,808,785,787,786,787,835,828,815,737,602,553,343,422,433,490,470,442,422,463,482,545,570,630,602,622,632,625,605,617,580,583,618,578,543,677,645,642,652,560,575,635,640,638,632,598,542,525,537,543,550,566,580,574,570,558,612,648,635,680,662,665,662,664,660,645,642,658,658,690,715,802,790,745,762,758,748,755,752,768,765,770,755,752,740,762,768,802,780,745,740,718,710,690,655,622,620,605,622,632,627,584,635,660,688,625,515,470,470,415,408,425,438,445,380,252,245,157,260,258,228,208,202,202,202,245,260,213,265,272,258,280,290,303,358,433,470,500,683,585,508,515,630,806,1090,966,933,908,875,915,887,817,790,818,772,770,745,690,755,750,758,706],
                spikes: {2:[0,1027],8:[733],10:[708],19:[0,1030],23:[0,1105],28:[787,945],39:[745],48:[312],54:[408],75:[510],106:[0,836],108:[682],142:[388],159:[145],163:[180],179:[0,1175],181:[845],182:[0,1003],183:[825]},
                ma: [
                    ["25,873 60,890 110,895 160,880 220,872 270,885 320,898 400,890 460,905 520,890 560,872 590,820 620,755 660,690 700,650 740,615 800,585 850,542 870,540 910,570 940,580 985,608 1040,603 1100,590 1170,598 1240,607 1290,625 1340,660 1390,690 1440,715 1500,738 1560,750 1590,745 1640,715 1710,690 1760,650 1810,580 1850,520 1900,450 1960,370 2010,305 2050,283 2090,285 2140,325 2170,390 2220,510 2260,600 2310,685 2350,745 2377,765",
                     "25,878 70,905 150,890 250,875 320,895 430,917 520,890 570,830 600,765 640,690 680,630 720,590 770,560 820,528 850,540 900,590 960,613 1040,605 1170,600 1270,615 1330,670 1380,712 1440,725 1530,760 1590,748 1690,690 1770,600 1830,520 1880,440 1940,340 1990,290 2055,253 2090,280 2140,350 2180,450 2240,620 2290,725 2340,780 2377,802"],
                    ["25,793 90,800 180,818 240,840 290,875 340,887 460,890 540,875 590,848 640,810 690,772 780,750 850,712 920,665 1000,630 1060,600 1150,570 1220,590 1300,622 1400,645 1500,670 1610,685 1710,695 1790,665 1860,625 1940,560 2020,490 2080,450 2150,432 2200,460 2260,482 2320,497 2377,525",
                     "25,793 90,830 200,855 300,880 400,895 540,875 640,820 700,755 780,705 840,660 920,625 1000,590 1060,562 1110,570 1200,605 1300,635 1500,678 1560,695 1640,708 1740,700 1820,640 1880,580 1960,500 2040,420 2090,400 2160,390 2230,440 2300,495 2377,563"],
                    ["25,840 110,838 170,823 240,818 330,823 420,840 520,852 580,857 640,830 700,800 800,773 900,750 980,718 1080,695 1180,665 1240,635 1330,625 1450,618 1500,632 1570,655 1640,658 1730,658 1800,640 1870,615 1940,585 2040,552 2140,536 2200,550 2290,555 2377,558",
                     "25,820 100,818 180,800 260,820 350,850 450,878 560,880 680,805 760,780 830,745 920,725 1000,690 1060,650 1120,628 1200,605 1280,592 1340,600 1400,625 1500,655 1600,665 1740,668 1820,650 1900,610 2000,560 2080,520 2140,497 2200,510 2280,520 2377,530"],
                    ["25,873 90,865 170,855 300,853 400,852 480,842 550,833 600,812 650,795 740,785 860,778 960,768 1060,742 1180,718 1290,693 1400,688 1500,676 1590,660 1680,640 1750,625 1840,618 1910,600 1990,570 2060,555 2160,552 2210,575 2290,588 2377,590",
                     "25,853 120,840 250,832 400,830 520,832 620,805 700,790 850,785 960,760 1050,715 1150,690 1290,660 1400,640 1500,637 1580,635 1700,650 1780,645 1880,615 2000,565 2150,555 2250,572 2377,580"],
                    ["25,934 100,920 200,885 280,880 380,875 480,866 560,857 620,832 700,805 800,785 900,765 1000,752 1200,742 1300,730 1500,715 1640,700 1740,678 1840,640 1920,605 2010,570 2080,557 2160,562 2240,585 2377,598",
                     "25,908 120,885 250,868 380,862 560,855 680,805 800,775 960,755 1100,745 1200,738 1350,715 1500,705 1650,690 1750,660 1850,620 1960,580 2080,565 2200,570 2377,600"],
                    ["25,1068 110,1025 200,968 270,940 350,923 450,905 560,880 640,852 740,825 850,802 950,785 1050,762 1180,742 1290,730 1380,735 1440,738 1590,735 1740,712 1840,680 1940,645 2040,610 2150,587 2377,588",
                     "25,978 110,940 220,912 330,893 450,898 560,860 680,820 800,795 960,770 1100,755 1290,735 1500,738 1620,722 1780,690 1880,645 2000,600 2080,570 2160,563 2250,580 2377,588"]
                ],
                prices: [["111.915",101],["111.875",200],["111.835",299],["111.795",398],["111.755",497],["111.715",596],["111.675",695],["111.635",794],["111.595",893],["111.555",992],["111.515",1091],["111.475",1190]],
                badges: [["111.842",278,"#000"],["111.670",707,"#000"],["111.607",860,"#008000"]],
                times: ["14 Mar 2019","14 Mar 15:30","14 Mar 16:50","14 Mar 18:10","14 Mar 19:30","14 Mar 20:50","14 Mar 22:10","14 Mar 23:30","15 Mar 00:50","15 Mar 02:10","15 Mar 03:30","15 Mar 04:50","15 Mar 06:10"]
            }
        };

        // Build high/open/close/low rows from a list of closes, with short pseudo-random wicks
        function fromCloses(c) {
            return c.closes.map((close, i) => {
                const open = i ? c.closes[i - 1] : close - 40;
                const s = c.spikes[i] || [];
                const up = (i * 7919 % 13) / 13 * c.wick, down = (i * 6367 % 11) / 11 * c.wick;
                return [s[0] || Math.min(open, close) - up, open, close, s[1] || Math.max(open, close) + down];
            });
        }

        function drawChart(id, c) {
            const X = v => Math.floor(v / 3) - c.ox;
            const Y = v => Math.floor(v / 3) - c.oy;
            const rect = (x, y, w, h, fill) => `<rect x="${x}" y="${y}" width="${w}" height="${h}" fill="${fill}"/>`;
            const text = (x, y, str, fill = "#000", anchor = "start") =>
                `<text x="${x}" y="${y}" fill="${fill}" text-anchor="${anchor}">${str}</text>`;
            const [fx, fy, fr, fb] = c.frame;
            const left = X(fx), top = Y(fy), right = X(fr), bottom = Y(fb);
            let out = "";

            for (const [x1, y1, x2, y2, color] of c.rects) out += rect(X(x1), Y(y1), X(x2) - X(x1), Y(y2) - Y(y1), color);
            out += rect(left, Y(c.bid), right - left, 1, "#708090");

            let wicks = "", up = "", down = "";
            (c.ohlc || fromCloses(c)).forEach(([h, o, cl, l], i) => {
                const x = X(c.x0 + i * c.step), t = Y(Math.min(o, cl)), b = Math.max(Y(Math.max(o, cl)), t + 1);
                wicks += `M${x} ${Y(h)}h1V${Y(l) + 1}h-1z`;
                if (cl < o && b - t > 1) up += `M${x - c.half + .5} ${t + .5}h${c.half * 2}V${b - .5}h${-c.half * 2}z`;
                else down += `M${x - c.half} ${t}h${c.half * 2 + 1}V${b}h${-c.half * 2 - 1}z`;
            });
            out += `<path d="${wicks}"/><path d="${up}" fill="#fff" stroke="#000"/><path d="${down}"/>`;

            c.ma.forEach((pair, i) => pair.forEach((pts, dashed) => {
                const p = pts.split(" ").map(s => s.split(",")).map(([x, y]) => `${X(+x)},${Y(+y)}`).join(" ");
                out += `<polyline points="${p}" fill="none" stroke="${COLORS[i]}" stroke-width="${dashed ? 1 : 2}"${dashed ? ' stroke-dasharray="18 6"' : ""}/>`;
            }));

            for (const [y, color] of c.lines) out += rect(left, Y(y) - 1, right - left, 2, color);

            for (const f of c.fibs || []) {
                ["100.0", "76.4", "61.8", "50.0", "38.2", "23.6", "0.0"].forEach((label, i) => {
                    out += rect(X(f.x), Y(f.ys[i]) - 1, right - X(f.x), 2, f.color);
                    out += text(right - 1, Y(f.ys[i]) - 2, label, f.color, "end");
                });
                out += `<path d="M${X(f.x)} ${Y(f.ys[0])}L${X(f.end[0])} ${Y(f.end[1])}" stroke="#90ee90" stroke-dasharray="2 4"/>`;
            }

            out += `<rect x="${left + .5}" y="${top + .5}" width="${right - left}" height="${bottom - top}" fill="none" stroke="#000"/>`;
            out += `<path d="M${X(c.shift) - 4} ${top + 1}h9l-4.500 5z" fill="#708090"/>`;
            out += `<path d="M${left + 4} ${top + 7}h7l-3.500 4z"/>`;
            out += text(left + 16, top + 12, `<tspan class="text-[10px]">${c.title[0]}&nbsp; </tspan>${c.title[1]}`);

            for (const [label, y] of c.prices) {
                out += rect(right, Y(y), 3, 1, "#000") + text(right + 6, Y(y) + 4, label);
            }
            for (const [label, y, color] of c.badges) {
                out += rect(right + 2, Y(y) - 5, 41, 11, color) + text(right + 6, Y(y) + 4, label, "#fff");
            }
            c.times.forEach((label, i) => {
                const x = X(c.x0 + i * 192);
                out += rect(x, bottom, 1, 3, "#000") + text(x - 1, bottom + 13, label);
            });

            document.getElementById(id).innerHTML =
                `<g shape-rendering="crispEdges" class="text-[9px] font-['DejaVu_Sans_Condensed','DejaVu_Sans',sans-serif]">${out}</g>`;
        }

        for (const id in charts) drawChart(id, charts[id]);
    </script>
</body>
</html>
